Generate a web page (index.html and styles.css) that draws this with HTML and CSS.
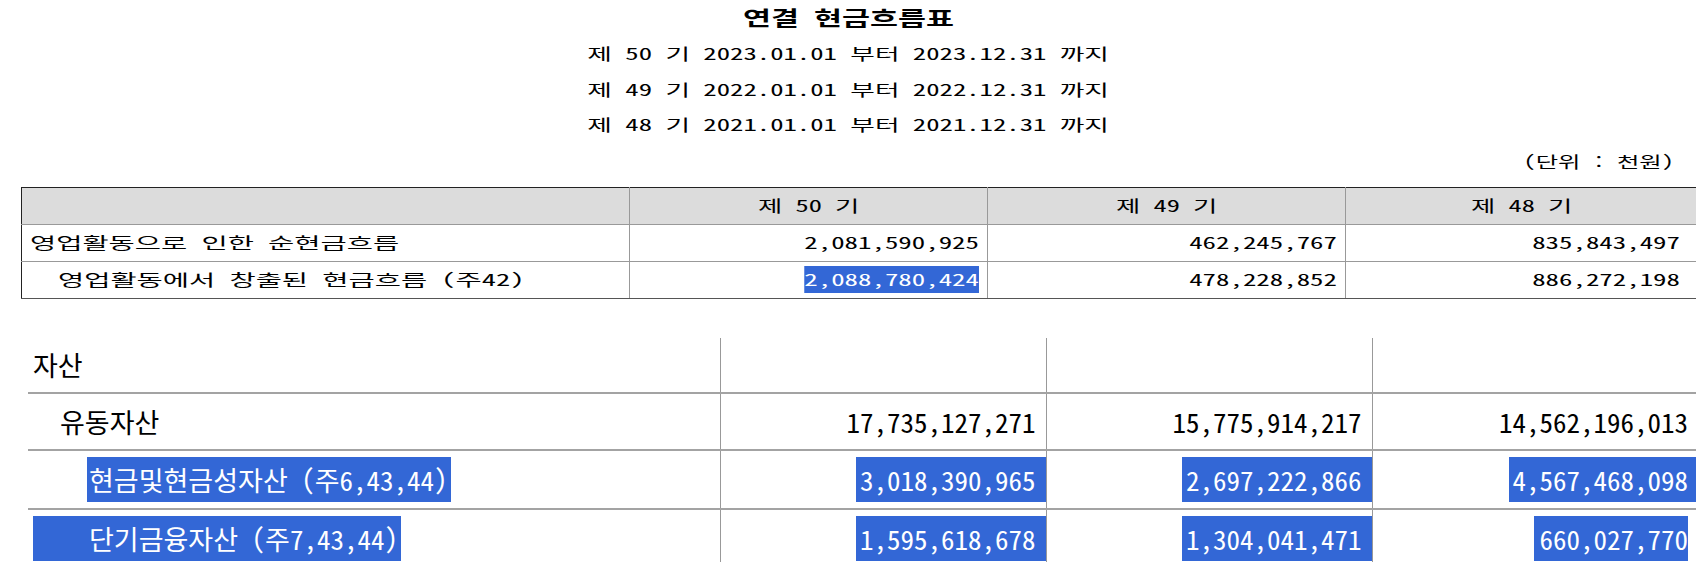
FILE: index.html
```html
<!DOCTYPE html>
<html lang="ko">
<head>
    <meta charset="UTF-8">
    <meta name="viewport" content="width=device-width, initial-scale=1.0">
    <title>연결 현금흐름표</title>
    <link rel="stylesheet" href="styles.css">
</head>
<body>
    <header class="report-head">
        <h1 class="title"><span class="wide">연결 현금흐름표</span></h1>
        <p class="period"><span class="wide">제 50 기 2023.01.01 부터 2023.12.31 까지</span></p>
        <p class="period"><span class="wide">제 49 기 2022.01.01 부터 2022.12.31 까지</span></p>
        <p class="period"><span class="wide">제 48 기 2021.01.01 부터 2021.12.31 까지</span></p>
        <p class="unit"><span class="wide">(단위 : 천원)</span></p>
    </header>

    <!-- cash flow summary -->
    <table class="cf">
        <colgroup>
            <col class="cf-name">
            <col class="cf-num">
            <col class="cf-num">
            <col class="cf-last">
        </colgroup>
        <thead>
            <tr>
                <th></th>
                <th><span class="wide">제 50 기</span></th>
                <th><span class="wide">제 49 기</span></th>
                <th><span class="wide">제 48 기</span></th>
            </tr>
        </thead>
        <tbody>
            <tr>
                <td class="name"><span class="wide">영업활동으로 인한 순현금흐름</span></td>
                <td class="num"><span class="wide">2,081,590,925</span></td>
                <td class="num"><span class="wide">462,245,767</span></td>
                <td class="num last"><span class="wide">835,843,497</span></td>
            </tr>
            <tr>
                <td class="name lv2"><span class="wide">영업활동에서 창출된 현금흐름 (주42)</span></td>
                <td class="num"><span class="wide sel">2,088,780,424</span></td>
                <td class="num"><span class="wide">478,228,852</span></td>
                <td class="num last"><span class="wide">886,272,198</span></td>
            </tr>
        </tbody>
    </table>

    <!-- balance sheet excerpt -->
    <table class="bs">
        <colgroup>
            <col class="bs-name">
            <col class="bs-num">
            <col class="bs-num">
            <col class="bs-num">
        </colgroup>
        <tr class="r0">
            <td>자산</td>
            <td></td>
            <td></td>
            <td></td>
        </tr>
        <tr class="r1">
            <td>　유동자산</td>
            <td>17,735,127,271</td>
            <td>15,775,914,217</td>
            <td>14,562,196,013</td>
        </tr>
        <tr class="r2">
            <td>　　<span class="sel">현금및현금성자산 (주6,43,44)</span></td>
            <td class="hl"><span class="sel">3,018,390,965</span></td>
            <td class="hl"><span class="sel">2,697,222,866</span></td>
            <td class="hl"><span class="sel">4,567,468,098</span></td>
        </tr>
        <tr class="r3">
            <td><span class="sel">　　단기금융자산 (주7,43,44)</span></td>
            <td class="hl"><span class="sel">1,595,618,678</span></td>
            <td class="hl"><span class="sel">1,304,041,471</span></td>
            <td><span class="sel tight">660,027,770</span></td>
        </tr>
    </table>
</body>
</html>
```

FILE: styles.css
```css
/* page */
html, body {
    margin: 0;
    padding: 0;
    overflow: hidden;
    background: #fff;
    color: #000;
}

body {
    width: 1696px;
    font-family: "Noto Sans Mono CJK KR", "Noto Sans CJK KR", sans-serif;
}

/* old report text is drawn wide */
.wide {
    display: inline-block;
    white-space: pre;
    transform: scaleX(1.65);
    transform-origin: center;
}

.sel {
    background-color: #3367d6;
    color: #fff;
}

/* heading block */
.report-head {
    text-align: center;
}

.title {
    margin: 0;
    font-size: 20px;
    line-height: 36px;
    font-weight: bold;
}

.title .wide {
    transform: scaleX(1.52);
}

.period {
    margin: 0;
    font-size: 16px;
    line-height: 35.5px;
}

.period .wide {
    transform: scaleX(1.67);
}

.unit {
    margin: 0;
    padding-right: 22px;
    font-size: 16px;
    line-height: 36px;
    text-align: right;
}

.unit .wide {
    transform-origin: right center;
    transform: scaleX(1.52);
}

/* cash flow table */
.cf {
    border-collapse: collapse;
    table-layout: fixed;
    width: 1677px;
    margin: 8px 0 0 21px;
    font-size: 16px;
}

.cf-name { width: 608px; }
.cf-num { width: 358px; }
.cf-last { width: 353px; }

.cf th,
.cf td {
    height: 36px;
    padding: 0 8px;
    border: 1px solid #999;
    line-height: 27px;
    white-space: nowrap;
}

.cf th {
    background-color: #dcdcdc;
    font-weight: normal;
    text-align: center;
    border-top-color: #222;
}

.cf tr > :first-child {
    border-left-color: #222;
}

.cf tbody tr:last-child td {
    border-bottom-color: #555;
}

.cf .name {
    text-align: left;
    padding-left: 8px;
}

.cf .name .wide {
    transform-origin: left center;
    transform: scaleX(1.78);
}

.cf .lv2 {
    padding-left: 36px;
}

.cf .num {
    text-align: right;
}

.cf .num.last {
    padding-right: 18px;
}

.cf .num .wide {
    transform-origin: right center;
    transform: scaleX(1.68);
}

/* balance sheet table */
.bs {
    border-collapse: collapse;
    table-layout: fixed;
    width: 1670px;
    margin: 39px 0 0 28px;
    font-size: 27px;
}

.bs-name { width: 692px; }
.bs-num { width: 326px; }

.bs td {
    padding: 0 10px 0 5px;
    border-bottom: 2px solid #a3a3a3;
    white-space: nowrap;
    line-height: 45px;
}

.bs td + td {
    border-left: 1px solid #999;
    text-align: right;
}

/* highlighted numbers run up to the column line */
.bs td.hl {
    padding-right: 0;
}

.bs .r0 td { height: 54px; }
.bs .r1 td { height: 55px; }
.bs .r2 td { height: 57px; }
.bs .r3 td { height: 57px; }

.bs .sel {
    display: inline-block;
    line-height: 45px;
    padding-left: 2px;
    padding-right: 3px;
}

.bs .hl .sel {
    padding-left: 4px;
    padding-right: 10px;
}

.bs .sel.tight {
    padding-left: 6px;
    padding-right: 0;
}
```
